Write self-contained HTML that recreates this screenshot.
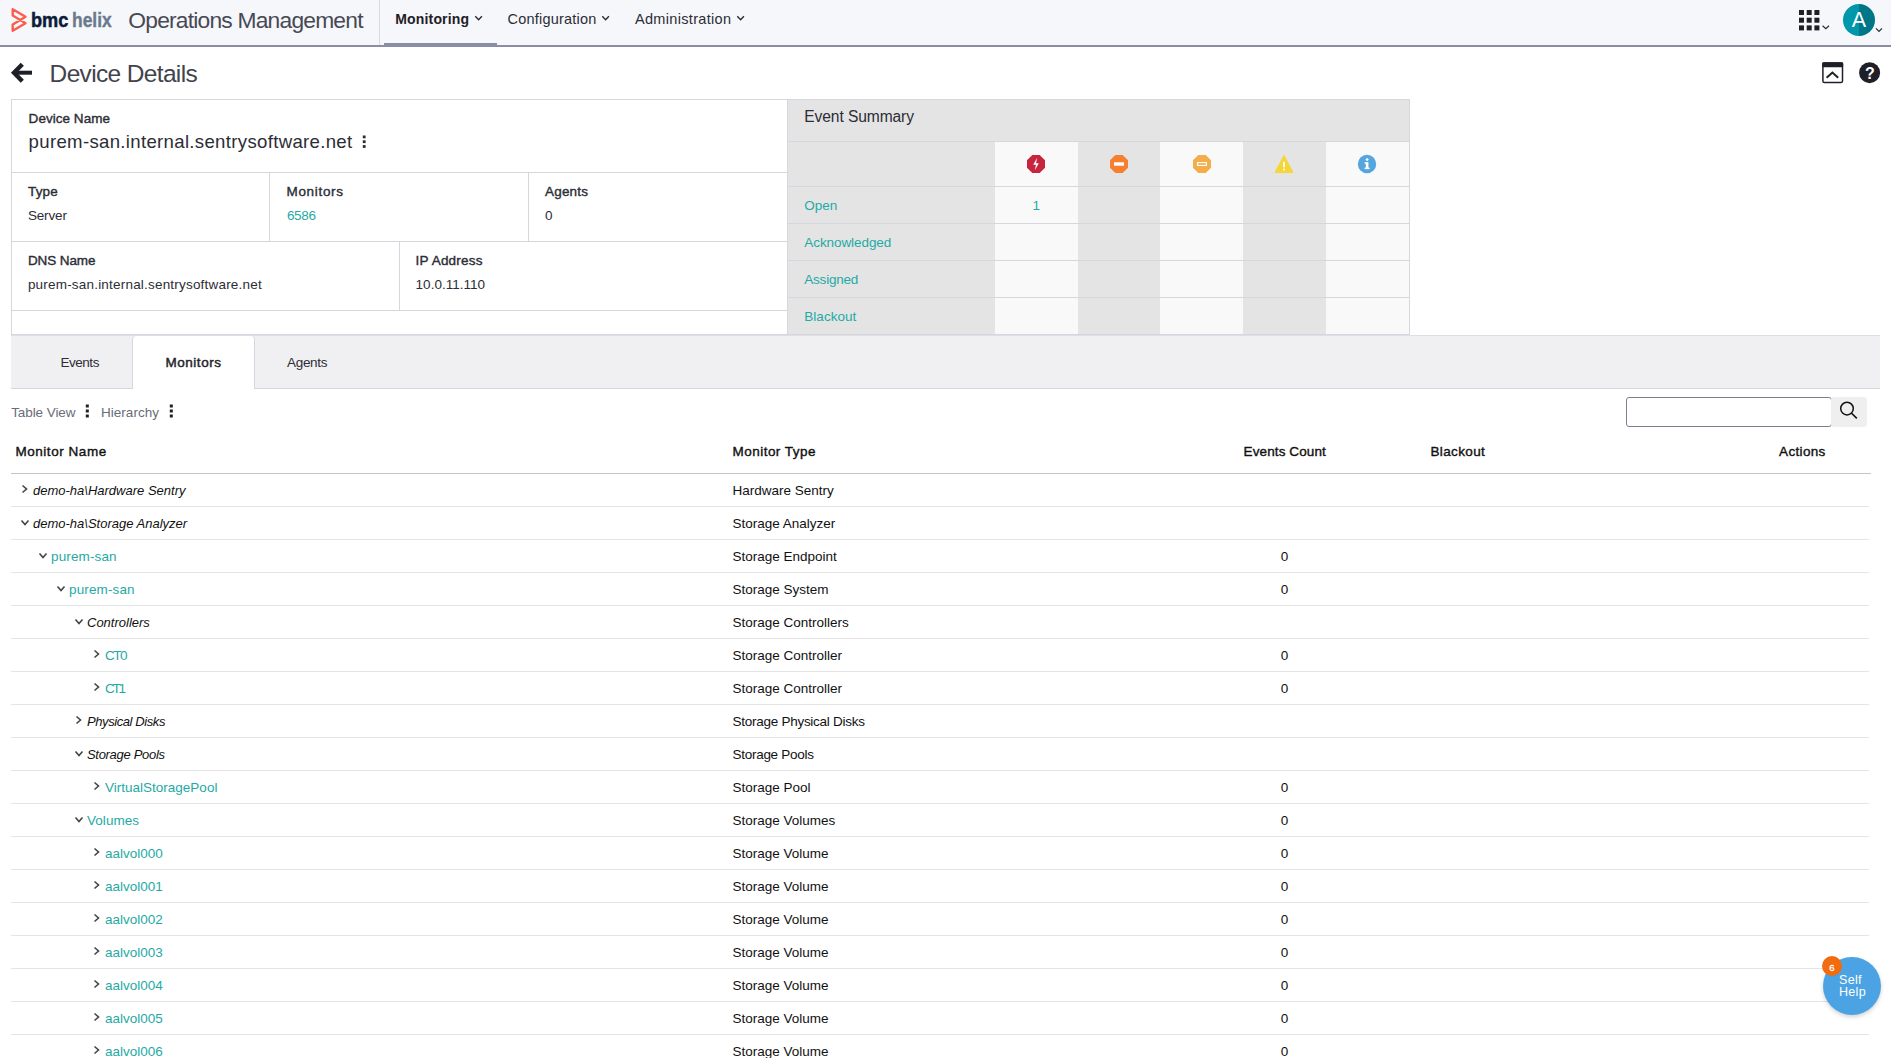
<!DOCTYPE html>
<html><head><meta charset="utf-8"><title>Device Details</title>
<style>
html,body{margin:0;padding:0;width:1891px;height:1058px;overflow:hidden;background:#fff;font-family:"Liberation Sans",sans-serif;}
.a{position:absolute;}
.t{position:absolute;white-space:nowrap;line-height:1;}
.ch{position:absolute;}
.bl{display:inline-block;width:0;height:0;}
.rl{position:absolute;left:11px;width:1858px;height:1px;background:#e4e4e4;}
#hdr{position:absolute;left:0;top:0;width:1891px;height:45px;background:#f6f7fb;border-bottom:2px solid #8b8ea2;}
.box{position:absolute;box-sizing:border-box;}
.hl{position:absolute;height:1px;background:#d6d6de;}
.vl{position:absolute;width:1px;background:#d6d6de;}
</style></head>
<body>
<!-- header -->
<div id="hdr"></div>
<svg class="a" style="left:9px;top:6px" width="20" height="28" viewBox="9 6 20 28">
  <path d="M12.7 9.3 L25.5 16.7 L20.3 20 L12.7 15.5 Z M20.3 20 L25.5 23.3 L12.7 30.7 L12.7 24.5 Z" fill="none" stroke="#fd5b4b" stroke-width="2.4" stroke-linejoin="round"/>
</svg>
<div class="t" style="left:31.4px;top:9.1px;font-size:21px;font-weight:700;color:#0b1c38;transform:scaleX(0.866);transform-origin:0 0;-webkit-text-stroke:0.5px #0b1c38;">bmc</div>
<div class="t" style="left:71.9px;top:9.1px;font-size:21px;font-weight:700;color:#6b798c;transform:scaleX(0.83);transform-origin:0 0;-webkit-text-stroke:0.4px #6b798c;">helix</div>
<div class="vl" style="left:379px;top:0;height:45px;background:#d9dbe3"></div>
<div class="a" style="left:384px;top:43px;width:113px;height:4px;background:#8b8ea2"></div>
<svg class="a" style="left:474px;top:15px" width="10" height="7" viewBox="0 0 10 7"><path d="M1.3 1.2 L4.6 4.8 L7.9 1.2" fill="none" stroke="#2a2b33" stroke-width="1.4"/></svg>
<svg class="a" style="left:601px;top:15px" width="10" height="7" viewBox="0 0 10 7"><path d="M1.3 1.2 L4.6 4.8 L7.9 1.2" fill="none" stroke="#2a2b33" stroke-width="1.4"/></svg>
<svg class="a" style="left:736px;top:15px" width="10" height="7" viewBox="0 0 10 7"><path d="M1.3 1.2 L4.6 4.8 L7.9 1.2" fill="none" stroke="#2a2b33" stroke-width="1.4"/></svg>
<!-- apps grid -->
<svg class="a" style="left:1798px;top:9px" width="34" height="24" viewBox="0 0 34 24">
  <g fill="#1d1e26">
    <rect x="1" y="1" width="5" height="5"/><rect x="8.7" y="1" width="5" height="5"/><rect x="16.4" y="1" width="5" height="5"/>
    <rect x="1" y="8.7" width="5" height="5"/><rect x="8.7" y="8.7" width="5" height="5"/><rect x="16.4" y="8.7" width="5" height="5"/>
    <rect x="1" y="16.4" width="5" height="5"/><rect x="8.7" y="16.4" width="5" height="5"/><rect x="16.4" y="16.4" width="5" height="5"/>
  </g>
  <path d="M24.6 16.8 L27.8 19.8 L31 16.8" fill="none" stroke="#2a2b33" stroke-width="1.2"/>
</svg>
<!-- avatar -->
<svg class="a" style="left:1842px;top:3px" width="44" height="34" viewBox="0 0 44 34">
  <defs><clipPath id="cc"><circle cx="17" cy="17" r="16"/></clipPath></defs>
  <g clip-path="url(#cc)"><rect x="0" y="0" width="17" height="34" fill="#0097ab"/><rect x="17" y="0" width="17" height="34" fill="#017689"/></g>
  <text x="17" y="24" text-anchor="middle" font-family="Liberation Sans" font-size="21.5" fill="#fff">A</text>
  <path d="M34 25.3 L37 28.3 L40 25.3" fill="none" stroke="#2a2b33" stroke-width="1.2"/>
</svg>

<!-- title row -->
<svg class="a" style="left:10px;top:61px" width="24" height="23" viewBox="0 0 24 23">
  <path d="M12.3 3.2 L4 11.7 L12.3 20.2" fill="none" stroke="#1f2027" stroke-width="4.4" stroke-linejoin="miter"/>
  <path d="M5 11.7 L22 11.7" fill="none" stroke="#1f2027" stroke-width="4"/>
</svg>
<svg class="a" style="left:1821px;top:61px" width="24" height="24" viewBox="0 0 24 24">
  <rect x="1.9" y="1.9" width="19.6" height="19.6" rx="1.6" fill="none" stroke="#1f2027" stroke-width="1.5"/>
  <rect x="1.2" y="1.2" width="21" height="5" rx="1.2" fill="#1f2027"/>
  <path d="M5.6 16.8 L11.4 11.6 L17.2 16.8" fill="none" stroke="#1f2027" stroke-width="2"/>
</svg>
<svg class="a" style="left:1858px;top:61px" width="24" height="24" viewBox="0 0 24 24">
  <circle cx="11.6" cy="11.7" r="10.5" fill="#1f2027"/>
  <text x="11.8" y="17.6" text-anchor="middle" font-family="Liberation Sans" font-weight="700" font-size="16" fill="#fff">?</text>
</svg>

<!-- device card -->
<div class="box" style="left:11px;top:99px;width:777px;height:236px;border:1px solid #d6d6de;background:#fff"></div>
<div class="hl" style="left:11px;top:172px;width:776px"></div>
<div class="hl" style="left:11px;top:241px;width:776px"></div>
<div class="hl" style="left:11px;top:310px;width:776px"></div>
<div class="vl" style="left:269px;top:172px;height:69px"></div>
<div class="vl" style="left:528px;top:172px;height:69px"></div>
<div class="vl" style="left:399px;top:241px;height:69px"></div>
<!-- kebab -->
<svg class="a" style="left:361px;top:134px" width="8" height="15" viewBox="0 0 8 15">
  <rect x="1.8" y="1.5" width="2.8" height="2.8" fill="#2c2d35"/><rect x="1.8" y="6.3" width="2.8" height="2.8" fill="#2c2d35"/><rect x="1.8" y="11.1" width="2.8" height="2.8" fill="#2c2d35"/>
</svg>

<!-- event summary -->
<div class="box" style="left:787px;top:99px;width:623px;height:236px;border:1px solid #d6d6de;background:#e4e4e5"></div>
<div class="a" style="left:995px;top:142px;width:83px;height:192px;background:#f9f9f9"></div>
<div class="a" style="left:1160px;top:142px;width:83px;height:192px;background:#f9f9f9"></div>
<div class="a" style="left:1326px;top:142px;width:83px;height:192px;background:#f9f9f9"></div>
<div class="hl" style="left:788px;top:141px;width:621px"></div>
<div class="hl" style="left:788px;top:186px;width:621px"></div>
<div class="hl" style="left:788px;top:223px;width:621px"></div>
<div class="hl" style="left:788px;top:260px;width:621px"></div>
<div class="hl" style="left:788px;top:297px;width:621px"></div>
<!-- severity icons -->
<svg class="a" style="left:1026px;top:154px" width="20" height="20" viewBox="0 0 20 20">
  <polygon points="6.3,1 13.7,1 19,6.3 19,13.7 13.7,19 6.3,19 1,13.7 1,6.3" fill="#c7253f"/>
  <path d="M11.2 3.8 L7.2 10.8 L10 10.8 L8.8 16.2 L12.8 9.2 L10 9.2 Z" fill="#fff"/>
</svg>
<svg class="a" style="left:1109px;top:154px" width="20" height="20" viewBox="0 0 20 20">
  <polygon points="6.3,1 13.7,1 19,6.3 19,13.7 13.7,19 6.3,19 1,13.7 1,6.3" fill="#f6802f"/>
  <rect x="5" y="8.3" width="10" height="3.4" fill="#fff"/>
</svg>
<svg class="a" style="left:1192px;top:154px" width="20" height="20" viewBox="0 0 20 20">
  <polygon points="6.3,1 13.7,1 19,6.3 19,13.7 13.7,19 6.3,19 1,13.7 1,6.3" fill="#f3ad4a"/>
  <rect x="5.6" y="8.6" width="8.8" height="2.8" fill="none" stroke="#fff" stroke-width="1.1"/>
</svg>
<svg class="a" style="left:1274px;top:154px" width="20" height="20" viewBox="0 0 20 20">
  <path d="M10 1.5 L19 18.6 L1 18.6 Z" fill="#f6d536" stroke="#f6d536" stroke-width="1" stroke-linejoin="round"/>
  <rect x="9.1" y="7.8" width="1.8" height="5.5" fill="#fff"/><rect x="9.1" y="14.6" width="1.8" height="1.8" fill="#fff"/>
</svg>
<svg class="a" style="left:1357px;top:154px" width="20" height="20" viewBox="0 0 20 20">
  <circle cx="10" cy="10" r="9.2" fill="#55a6e0"/>
  <rect x="8.8" y="8.2" width="2.6" height="6.8" fill="#fff"/><rect x="7.6" y="8.2" width="2" height="1.5" fill="#fff"/><rect x="7.6" y="13.6" width="5" height="1.5" fill="#fff"/>
  <circle cx="10.1" cy="5.6" r="1.4" fill="#fff"/>
</svg>

<!-- tabs -->
<div class="a" style="left:11px;top:335px;width:1869px;height:54px;background:#f0f0f2;border-top:1px solid #dedee5;border-bottom:1px solid #d6d6de;box-sizing:border-box"></div>
<div class="box" style="left:132px;top:336px;width:123px;height:53px;background:#fff;border:1px solid #d6d6de;border-top:none;border-bottom:none;border-radius:4px 4px 0 0"></div>

<!-- toolbar kebabs -->
<svg class="a" style="left:84px;top:403px" width="8" height="16" viewBox="0 0 8 16">
  <rect x="1.8" y="1.5" width="3" height="3" fill="#1f2027"/><rect x="1.8" y="6.5" width="3" height="3" fill="#1f2027"/><rect x="1.8" y="11.5" width="3" height="3" fill="#1f2027"/>
</svg>
<svg class="a" style="left:168px;top:403px" width="8" height="16" viewBox="0 0 8 16">
  <rect x="1.8" y="1.5" width="3" height="3" fill="#1f2027"/><rect x="1.8" y="6.5" width="3" height="3" fill="#1f2027"/><rect x="1.8" y="11.5" width="3" height="3" fill="#1f2027"/>
</svg>
<!-- search -->
<div class="box" style="left:1626px;top:397px;width:206px;height:30px;border:1px solid #7c7f90;border-radius:3px;background:#fff"></div>
<div class="box" style="left:1831px;top:397px;width:36px;height:30px;background:#efeff0;border-radius:3px"></div>
<svg class="a" style="left:1838px;top:401px" width="22" height="22" viewBox="0 0 22 22">
  <circle cx="9" cy="7.6" r="6.3" fill="none" stroke="#111" stroke-width="1.5"/>
  <path d="M13.3 12 L18.8 17.4" stroke="#111" stroke-width="1.6"/>
</svg>

<!-- table -->
<div class="a" style="left:11px;top:473px;width:1860px;height:1px;background:#c5c5c5"></div>
<svg class="ch" style="left:21px;top:484px" width="8" height="10" viewBox="0 0 8 10"><path d="M1.5 1.5 L5.5 5 L1.5 8.5" fill="none" stroke="#444" stroke-width="1.6"/></svg>
<div class="rl" style="top:506px"></div>
<svg class="ch" style="left:20px;top:519px" width="10" height="8" viewBox="0 0 10 8"><path d="M1.5 1.5 L5 5.5 L8.5 1.5" fill="none" stroke="#444" stroke-width="1.6"/></svg>
<div class="rl" style="top:539px"></div>
<svg class="ch" style="left:38px;top:552px" width="10" height="8" viewBox="0 0 10 8"><path d="M1.5 1.5 L5 5.5 L8.5 1.5" fill="none" stroke="#444" stroke-width="1.6"/></svg>
<div class="rl" style="top:572px"></div>
<svg class="ch" style="left:56px;top:585px" width="10" height="8" viewBox="0 0 10 8"><path d="M1.5 1.5 L5 5.5 L8.5 1.5" fill="none" stroke="#444" stroke-width="1.6"/></svg>
<div class="rl" style="top:605px"></div>
<svg class="ch" style="left:74px;top:618px" width="10" height="8" viewBox="0 0 10 8"><path d="M1.5 1.5 L5 5.5 L8.5 1.5" fill="none" stroke="#444" stroke-width="1.6"/></svg>
<div class="rl" style="top:638px"></div>
<svg class="ch" style="left:93px;top:649px" width="8" height="10" viewBox="0 0 8 10"><path d="M1.5 1.5 L5.5 5 L1.5 8.5" fill="none" stroke="#444" stroke-width="1.6"/></svg>
<div class="rl" style="top:671px"></div>
<svg class="ch" style="left:93px;top:682px" width="8" height="10" viewBox="0 0 8 10"><path d="M1.5 1.5 L5.5 5 L1.5 8.5" fill="none" stroke="#444" stroke-width="1.6"/></svg>
<div class="rl" style="top:704px"></div>
<svg class="ch" style="left:75px;top:715px" width="8" height="10" viewBox="0 0 8 10"><path d="M1.5 1.5 L5.5 5 L1.5 8.5" fill="none" stroke="#444" stroke-width="1.6"/></svg>
<div class="rl" style="top:737px"></div>
<svg class="ch" style="left:74px;top:750px" width="10" height="8" viewBox="0 0 10 8"><path d="M1.5 1.5 L5 5.5 L8.5 1.5" fill="none" stroke="#444" stroke-width="1.6"/></svg>
<div class="rl" style="top:770px"></div>
<svg class="ch" style="left:93px;top:781px" width="8" height="10" viewBox="0 0 8 10"><path d="M1.5 1.5 L5.5 5 L1.5 8.5" fill="none" stroke="#444" stroke-width="1.6"/></svg>
<div class="rl" style="top:803px"></div>
<svg class="ch" style="left:74px;top:816px" width="10" height="8" viewBox="0 0 10 8"><path d="M1.5 1.5 L5 5.5 L8.5 1.5" fill="none" stroke="#444" stroke-width="1.6"/></svg>
<div class="rl" style="top:836px"></div>
<svg class="ch" style="left:93px;top:847px" width="8" height="10" viewBox="0 0 8 10"><path d="M1.5 1.5 L5.5 5 L1.5 8.5" fill="none" stroke="#444" stroke-width="1.6"/></svg>
<div class="rl" style="top:869px"></div>
<svg class="ch" style="left:93px;top:880px" width="8" height="10" viewBox="0 0 8 10"><path d="M1.5 1.5 L5.5 5 L1.5 8.5" fill="none" stroke="#444" stroke-width="1.6"/></svg>
<div class="rl" style="top:902px"></div>
<svg class="ch" style="left:93px;top:913px" width="8" height="10" viewBox="0 0 8 10"><path d="M1.5 1.5 L5.5 5 L1.5 8.5" fill="none" stroke="#444" stroke-width="1.6"/></svg>
<div class="rl" style="top:935px"></div>
<svg class="ch" style="left:93px;top:946px" width="8" height="10" viewBox="0 0 8 10"><path d="M1.5 1.5 L5.5 5 L1.5 8.5" fill="none" stroke="#444" stroke-width="1.6"/></svg>
<div class="rl" style="top:968px"></div>
<svg class="ch" style="left:93px;top:979px" width="8" height="10" viewBox="0 0 8 10"><path d="M1.5 1.5 L5.5 5 L1.5 8.5" fill="none" stroke="#444" stroke-width="1.6"/></svg>
<div class="rl" style="top:1001px"></div>
<svg class="ch" style="left:93px;top:1012px" width="8" height="10" viewBox="0 0 8 10"><path d="M1.5 1.5 L5.5 5 L1.5 8.5" fill="none" stroke="#444" stroke-width="1.6"/></svg>
<div class="rl" style="top:1034px"></div>
<svg class="ch" style="left:93px;top:1045px" width="8" height="10" viewBox="0 0 8 10"><path d="M1.5 1.5 L5.5 5 L1.5 8.5" fill="none" stroke="#444" stroke-width="1.6"/></svg>
<div class="rl" style="top:1067px"></div>

<div class="t" id="t0" style="left:128.3px;top:9.00px;font-size:22.8px;font-weight:400;font-style:normal;color:#474953;letter-spacing:-0.786px;">Operations Management<span class="bl" id="b0"></span></div>
<div class="t" id="t1" style="left:395.2px;top:12.01px;font-size:14px;font-weight:700;font-style:normal;color:#1f2027;letter-spacing:0.176px;">Monitoring<span class="bl" id="b1"></span></div>
<div class="t" id="t2" style="left:507.5px;top:12.00px;font-size:14.5px;font-weight:400;font-style:normal;color:#2b2d36;letter-spacing:0.212px;">Configuration<span class="bl" id="b2"></span></div>
<div class="t" id="t3" style="left:635.0px;top:12.00px;font-size:14.5px;font-weight:400;font-style:normal;color:#2b2d36;letter-spacing:0.317px;">Administration<span class="bl" id="b3"></span></div>
<div class="t" id="t4" style="left:49.6px;top:62.01px;font-size:24.5px;font-weight:400;font-style:normal;color:#42434c;letter-spacing:-0.653px;">Device Details<span class="bl" id="b4"></span></div>
<div class="t" id="t5" style="left:28.6px;top:112.01px;font-size:13.5px;font-weight:400;-webkit-text-stroke:0.38px #2c2d35;font-style:normal;color:#2c2d35;letter-spacing:0.037px;">Device Name<span class="bl" id="b5"></span></div>
<div class="t" id="t6" style="left:28.6px;top:133.00px;font-size:18.6px;font-weight:400;font-style:normal;color:#2c2d35;letter-spacing:0.319px;">purem-san.internal.sentrysoftware.net<span class="bl" id="b6"></span></div>
<div class="t" id="t7" style="left:27.9px;top:185.00px;font-size:13.5px;font-weight:400;-webkit-text-stroke:0.38px #2c2d35;font-style:normal;color:#2c2d35;letter-spacing:0.240px;">Type<span class="bl" id="b7"></span></div>
<div class="t" id="t8" style="left:27.9px;top:209.00px;font-size:13.5px;font-weight:400;font-style:normal;color:#2c2d35;letter-spacing:-0.153px;">Server<span class="bl" id="b8"></span></div>
<div class="t" id="t9" style="left:286.5px;top:185.00px;font-size:13.5px;font-weight:400;-webkit-text-stroke:0.38px #2c2d35;font-style:normal;color:#2c2d35;letter-spacing:0.676px;">Monitors<span class="bl" id="b9"></span></div>
<div class="t" id="t10" style="left:286.9px;top:209.00px;font-size:13.5px;font-weight:400;font-style:normal;color:#1faaa4;letter-spacing:-0.316px;">6586<span class="bl" id="b10"></span></div>
<div class="t" id="t11" style="left:545.0px;top:185.00px;font-size:13.5px;font-weight:400;-webkit-text-stroke:0.38px #2c2d35;font-style:normal;color:#2c2d35;letter-spacing:0.194px;">Agents<span class="bl" id="b11"></span></div>
<div class="t" id="t12" style="left:545.0px;top:209.00px;font-size:13.5px;font-weight:400;font-style:normal;color:#2c2d35;">0<span class="bl" id="b12"></span></div>
<div class="t" id="t13" style="left:27.9px;top:254.01px;font-size:13.5px;font-weight:400;-webkit-text-stroke:0.38px #2c2d35;font-style:normal;color:#2c2d35;letter-spacing:-0.095px;">DNS Name<span class="bl" id="b13"></span></div>
<div class="t" id="t14" style="left:27.9px;top:278.01px;font-size:13.5px;font-weight:400;font-style:normal;color:#2c2d35;letter-spacing:0.200px;">purem-san.internal.sentrysoftware.net<span class="bl" id="b14"></span></div>
<div class="t" id="t15" style="left:415.6px;top:254.01px;font-size:13.5px;font-weight:400;-webkit-text-stroke:0.38px #2c2d35;font-style:normal;color:#2c2d35;letter-spacing:0.195px;">IP Address<span class="bl" id="b15"></span></div>
<div class="t" id="t16" style="left:415.6px;top:278.01px;font-size:13.5px;font-weight:400;font-style:normal;color:#2c2d35;letter-spacing:0.017px;">10.0.11.110<span class="bl" id="b16"></span></div>
<div class="t" id="t17" style="left:804.3px;top:109.00px;font-size:15.6px;font-weight:400;font-style:normal;color:#2c2d35;letter-spacing:-0.103px;">Event Summary<span class="bl" id="b17"></span></div>
<div class="t" id="t18" style="left:804.3px;top:199.01px;font-size:13.5px;font-weight:400;font-style:normal;color:#1faaa4;letter-spacing:-0.010px;">Open<span class="bl" id="b18"></span></div>
<div class="t" id="t19" style="left:804.3px;top:236.01px;font-size:13.5px;font-weight:400;font-style:normal;color:#1faaa4;letter-spacing:-0.074px;">Acknowledged<span class="bl" id="b19"></span></div>
<div class="t" id="t20" style="left:804.3px;top:273.00px;font-size:13.5px;font-weight:400;font-style:normal;color:#1faaa4;letter-spacing:-0.221px;">Assigned<span class="bl" id="b20"></span></div>
<div class="t" id="t21" style="left:804.3px;top:310.01px;font-size:13.5px;font-weight:400;font-style:normal;color:#1faaa4;letter-spacing:0.031px;">Blackout<span class="bl" id="b21"></span></div>
<div class="t" id="t22" style="left:936.3px;width:200px;text-align:center;top:199.01px;font-size:13.5px;font-weight:400;font-style:normal;color:#1faaa4;">1<span class="bl" id="b22"></span></div>
<div class="t" id="t23" style="left:60.4px;top:356.01px;font-size:13.5px;font-weight:400;font-style:normal;color:#2c2d35;letter-spacing:-0.456px;">Events<span class="bl" id="b23"></span></div>
<div class="t" id="t24" style="left:165.4px;top:356.01px;font-size:13.5px;font-weight:400;font-style:normal;color:#22232a;letter-spacing:0.548px;-webkit-text-stroke:0.45px #22232a;">Monitors<span class="bl" id="b24"></span></div>
<div class="t" id="t25" style="left:287.0px;top:356.01px;font-size:13.5px;font-weight:400;font-style:normal;color:#2c2d35;letter-spacing:-0.306px;">Agents<span class="bl" id="b25"></span></div>
<div class="t" id="t26" style="left:11.2px;top:406.00px;font-size:13.5px;font-weight:400;font-style:normal;color:#6a6c78;letter-spacing:-0.083px;">Table View<span class="bl" id="b26"></span></div>
<div class="t" id="t27" style="left:101.0px;top:406.00px;font-size:13.5px;font-weight:400;font-style:normal;color:#6a6c78;letter-spacing:0.029px;">Hierarchy<span class="bl" id="b27"></span></div>
<div class="t" id="t28" style="left:15.4px;top:445.01px;font-size:13.5px;font-weight:400;-webkit-text-stroke:0.38px #111;font-style:normal;color:#111;letter-spacing:0.547px;">Monitor Name<span class="bl" id="b28"></span></div>
<div class="t" id="t29" style="left:732.5px;top:445.01px;font-size:13.5px;font-weight:400;-webkit-text-stroke:0.38px #111;font-style:normal;color:#111;letter-spacing:0.473px;">Monitor Type<span class="bl" id="b29"></span></div>
<div class="t" id="t30" style="left:1243.6px;top:445.01px;font-size:13.5px;font-weight:400;-webkit-text-stroke:0.38px #111;font-style:normal;color:#111;letter-spacing:0.105px;">Events Count<span class="bl" id="b30"></span></div>
<div class="t" id="t31" style="left:1430.4px;top:445.01px;font-size:13.5px;font-weight:400;-webkit-text-stroke:0.38px #111;font-style:normal;color:#111;letter-spacing:0.374px;">Blackout<span class="bl" id="b31"></span></div>
<div class="t" id="t32" style="left:1779.1px;top:445.01px;font-size:13.5px;font-weight:400;-webkit-text-stroke:0.38px #111;font-style:normal;color:#111;letter-spacing:0.320px;">Actions<span class="bl" id="b32"></span></div>
<div class="t" id="t33" style="left:33.0px;top:484.01px;font-size:13px;font-weight:400;font-style:italic;color:#111;">demo-ha\Hardware Sentry<span class="bl" id="b33"></span></div>
<div class="t" id="t34" style="left:732.5px;top:484.01px;font-size:13.5px;font-weight:400;font-style:normal;color:#111;">Hardware Sentry<span class="bl" id="b34"></span></div>
<div class="t" id="t35" style="left:33.0px;top:517.01px;font-size:13px;font-weight:400;font-style:italic;color:#111;">demo-ha\Storage Analyzer<span class="bl" id="b35"></span></div>
<div class="t" id="t36" style="left:732.5px;top:517.01px;font-size:13.5px;font-weight:400;font-style:normal;color:#111;">Storage Analyzer<span class="bl" id="b36"></span></div>
<div class="t" id="t37" style="left:51.0px;top:550.01px;font-size:13.5px;font-weight:400;font-style:normal;color:#1faaa4;letter-spacing:0.134px;">purem-san<span class="bl" id="b37"></span></div>
<div class="t" id="t38" style="left:732.5px;top:550.01px;font-size:13.5px;font-weight:400;font-style:normal;color:#111;">Storage Endpoint<span class="bl" id="b38"></span></div>
<div class="t" id="t39" style="left:1184.5px;width:200px;text-align:center;top:550.01px;font-size:13.5px;font-weight:400;font-style:normal;color:#111;">0<span class="bl" id="b39"></span></div>
<div class="t" id="t40" style="left:69.0px;top:583.01px;font-size:13.5px;font-weight:400;font-style:normal;color:#1faaa4;letter-spacing:0.134px;">purem-san<span class="bl" id="b40"></span></div>
<div class="t" id="t41" style="left:732.5px;top:583.01px;font-size:13.5px;font-weight:400;font-style:normal;color:#111;">Storage System<span class="bl" id="b41"></span></div>
<div class="t" id="t42" style="left:1184.5px;width:200px;text-align:center;top:583.01px;font-size:13.5px;font-weight:400;font-style:normal;color:#111;">0<span class="bl" id="b42"></span></div>
<div class="t" id="t43" style="left:87.0px;top:616.01px;font-size:13px;font-weight:400;font-style:italic;color:#111;">Controllers<span class="bl" id="b43"></span></div>
<div class="t" id="t44" style="left:732.5px;top:616.01px;font-size:13.5px;font-weight:400;font-style:normal;color:#111;">Storage Controllers<span class="bl" id="b44"></span></div>
<div class="t" id="t45" style="left:105.0px;top:649.01px;font-size:13.5px;font-weight:400;font-style:normal;color:#1faaa4;letter-spacing:-1.508px;">CT0<span class="bl" id="b45"></span></div>
<div class="t" id="t46" style="left:732.5px;top:649.01px;font-size:13.5px;font-weight:400;font-style:normal;color:#111;">Storage Controller<span class="bl" id="b46"></span></div>
<div class="t" id="t47" style="left:1184.5px;width:200px;text-align:center;top:649.01px;font-size:13.5px;font-weight:400;font-style:normal;color:#111;">0<span class="bl" id="b47"></span></div>
<div class="t" id="t48" style="left:105.0px;top:682.01px;font-size:13.5px;font-weight:400;font-style:normal;color:#1faaa4;letter-spacing:-2.208px;">CT1<span class="bl" id="b48"></span></div>
<div class="t" id="t49" style="left:732.5px;top:682.01px;font-size:13.5px;font-weight:400;font-style:normal;color:#111;">Storage Controller<span class="bl" id="b49"></span></div>
<div class="t" id="t50" style="left:1184.5px;width:200px;text-align:center;top:682.01px;font-size:13.5px;font-weight:400;font-style:normal;color:#111;">0<span class="bl" id="b50"></span></div>
<div class="t" id="t51" style="left:87.0px;top:715.01px;font-size:13px;font-weight:400;font-style:italic;color:#111;letter-spacing:-0.415px;">Physical Disks<span class="bl" id="b51"></span></div>
<div class="t" id="t52" style="left:732.5px;top:715.01px;font-size:13.5px;font-weight:400;font-style:normal;color:#111;letter-spacing:-0.265px;">Storage Physical Disks<span class="bl" id="b52"></span></div>
<div class="t" id="t53" style="left:87.0px;top:748.01px;font-size:13px;font-weight:400;font-style:italic;color:#111;letter-spacing:-0.306px;">Storage Pools<span class="bl" id="b53"></span></div>
<div class="t" id="t54" style="left:732.5px;top:748.01px;font-size:13.5px;font-weight:400;font-style:normal;color:#111;letter-spacing:-0.276px;">Storage Pools<span class="bl" id="b54"></span></div>
<div class="t" id="t55" style="left:105.0px;top:781.01px;font-size:13.5px;font-weight:400;font-style:normal;color:#1faaa4;letter-spacing:0.004px;">VirtualStoragePool<span class="bl" id="b55"></span></div>
<div class="t" id="t56" style="left:732.5px;top:781.01px;font-size:13.5px;font-weight:400;font-style:normal;color:#111;">Storage Pool<span class="bl" id="b56"></span></div>
<div class="t" id="t57" style="left:1184.5px;width:200px;text-align:center;top:781.01px;font-size:13.5px;font-weight:400;font-style:normal;color:#111;">0<span class="bl" id="b57"></span></div>
<div class="t" id="t58" style="left:87.0px;top:814.01px;font-size:13.5px;font-weight:400;font-style:normal;color:#1faaa4;letter-spacing:0.053px;">Volumes<span class="bl" id="b58"></span></div>
<div class="t" id="t59" style="left:732.5px;top:814.01px;font-size:13.5px;font-weight:400;font-style:normal;color:#111;">Storage Volumes<span class="bl" id="b59"></span></div>
<div class="t" id="t60" style="left:1184.5px;width:200px;text-align:center;top:814.01px;font-size:13.5px;font-weight:400;font-style:normal;color:#111;">0<span class="bl" id="b60"></span></div>
<div class="t" id="t61" style="left:105.0px;top:847.01px;font-size:13.5px;font-weight:400;font-style:normal;color:#1faaa4;">aalvol000<span class="bl" id="b61"></span></div>
<div class="t" id="t62" style="left:732.5px;top:847.01px;font-size:13.5px;font-weight:400;font-style:normal;color:#111;">Storage Volume<span class="bl" id="b62"></span></div>
<div class="t" id="t63" style="left:1184.5px;width:200px;text-align:center;top:847.01px;font-size:13.5px;font-weight:400;font-style:normal;color:#111;">0<span class="bl" id="b63"></span></div>
<div class="t" id="t64" style="left:105.0px;top:880.01px;font-size:13.5px;font-weight:400;font-style:normal;color:#1faaa4;">aalvol001<span class="bl" id="b64"></span></div>
<div class="t" id="t65" style="left:732.5px;top:880.01px;font-size:13.5px;font-weight:400;font-style:normal;color:#111;">Storage Volume<span class="bl" id="b65"></span></div>
<div class="t" id="t66" style="left:1184.5px;width:200px;text-align:center;top:880.01px;font-size:13.5px;font-weight:400;font-style:normal;color:#111;">0<span class="bl" id="b66"></span></div>
<div class="t" id="t67" style="left:105.0px;top:913.01px;font-size:13.5px;font-weight:400;font-style:normal;color:#1faaa4;">aalvol002<span class="bl" id="b67"></span></div>
<div class="t" id="t68" style="left:732.5px;top:913.01px;font-size:13.5px;font-weight:400;font-style:normal;color:#111;">Storage Volume<span class="bl" id="b68"></span></div>
<div class="t" id="t69" style="left:1184.5px;width:200px;text-align:center;top:913.01px;font-size:13.5px;font-weight:400;font-style:normal;color:#111;">0<span class="bl" id="b69"></span></div>
<div class="t" id="t70" style="left:105.0px;top:946.01px;font-size:13.5px;font-weight:400;font-style:normal;color:#1faaa4;">aalvol003<span class="bl" id="b70"></span></div>
<div class="t" id="t71" style="left:732.5px;top:946.01px;font-size:13.5px;font-weight:400;font-style:normal;color:#111;">Storage Volume<span class="bl" id="b71"></span></div>
<div class="t" id="t72" style="left:1184.5px;width:200px;text-align:center;top:946.01px;font-size:13.5px;font-weight:400;font-style:normal;color:#111;">0<span class="bl" id="b72"></span></div>
<div class="t" id="t73" style="left:105.0px;top:979.01px;font-size:13.5px;font-weight:400;font-style:normal;color:#1faaa4;">aalvol004<span class="bl" id="b73"></span></div>
<div class="t" id="t74" style="left:732.5px;top:979.01px;font-size:13.5px;font-weight:400;font-style:normal;color:#111;">Storage Volume<span class="bl" id="b74"></span></div>
<div class="t" id="t75" style="left:1184.5px;width:200px;text-align:center;top:979.01px;font-size:13.5px;font-weight:400;font-style:normal;color:#111;">0<span class="bl" id="b75"></span></div>
<div class="t" id="t76" style="left:105.0px;top:1012.01px;font-size:13.5px;font-weight:400;font-style:normal;color:#1faaa4;">aalvol005<span class="bl" id="b76"></span></div>
<div class="t" id="t77" style="left:732.5px;top:1012.01px;font-size:13.5px;font-weight:400;font-style:normal;color:#111;">Storage Volume<span class="bl" id="b77"></span></div>
<div class="t" id="t78" style="left:1184.5px;width:200px;text-align:center;top:1012.01px;font-size:13.5px;font-weight:400;font-style:normal;color:#111;">0<span class="bl" id="b78"></span></div>
<div class="t" id="t79" style="left:105.0px;top:1045.01px;font-size:13.5px;font-weight:400;font-style:normal;color:#1faaa4;">aalvol006<span class="bl" id="b79"></span></div>
<div class="t" id="t80" style="left:732.5px;top:1045.01px;font-size:13.5px;font-weight:400;font-style:normal;color:#111;">Storage Volume<span class="bl" id="b80"></span></div>
<div class="t" id="t81" style="left:1184.5px;width:200px;text-align:center;top:1045.01px;font-size:13.5px;font-weight:400;font-style:normal;color:#111;">0<span class="bl" id="b81"></span></div>

<!-- self help -->
<div class="a" style="left:1823px;top:957px;width:58px;height:58px;border-radius:50%;background:#4ba3e3;box-shadow:0 2px 4px rgba(0,0,0,0.18)"></div>
<div class="t" style="left:1839px;top:975px;font-size:12.5px;color:#fff;letter-spacing:0.3px;line-height:11.5px">Self<br>Help</div>
<div class="a" style="left:1822px;top:956px;width:20px;height:20px;border-radius:50%;background:#f26b0e"></div>
<div class="t" style="left:1822px;top:962.5px;width:20px;text-align:center;font-size:9.5px;font-weight:400;color:#fff;-webkit-text-stroke:0.3px #fff">6</div>
</body></html>
